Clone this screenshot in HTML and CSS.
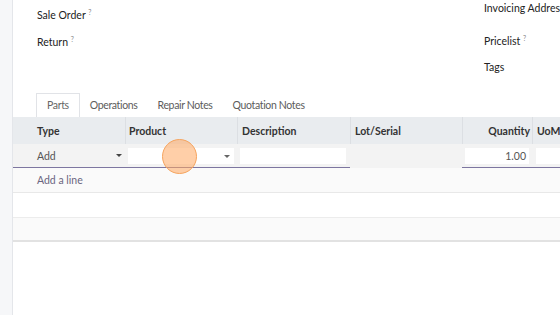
FILE: index.html
```html
<!DOCTYPE html>
<html lang="en">
<head>
    <meta charset="UTF-8">
    <title>Repair Order</title>
    <link rel="stylesheet" href="styles.css">
</head>
<body>
    <div class="gutter"></div>
    <div class="sheet">
        <div class="fields">
            <div class="col left">
                <div class="field f-sale">Sale Order <sup>?</sup></div>
                <div class="field f-return">Return <sup>?</sup></div>
            </div>
            <div class="col right">
                <div class="field f-inv">Invoicing Address</div>
                <div class="field f-price">Pricelist <sup>?</sup></div>
                <div class="field f-tags">Tags</div>
            </div>
        </div>

        <div class="tabs">
            <div class="tab active">Parts</div>
            <div class="tab">Operations</div>
            <div class="tab">Repair Notes</div>
            <div class="tab">Quotation Notes</div>
        </div>

        <div class="grid">
            <div class="row head">
                <div class="c c-type">Type</div>
                <div class="c c-prod">Product</div>
                <div class="c c-desc">Description</div>
                <div class="c c-lot">Lot/Serial</div>
                <div class="c c-qty">Quantity</div>
                <div class="c c-uom">UoM</div>
            </div>
            <div class="row edit">
                <div class="c c-type line"><span>Add</span><span class="caret"></span></div>
                <div class="c c-prod line"><div class="input"><span class="caret"></span></div>
                    <div class="click"></div>
                </div>
                <div class="c c-desc line"><div class="input"></div></div>
                <div class="c c-lot"></div>
                <div class="c c-qty line"><div class="input num">1.00</div></div>
                <div class="c c-uom line"><div class="input"></div></div>
            </div>
            <div class="row add"><div class="c c-type">Add a line</div></div>
            <div class="row empty"></div>
            <div class="row empty alt"></div>
        </div>
    </div>
</body>
</html>
```

FILE: styles.css
```css
body {
    margin: 0;
    width: 560px;
    height: 315px;
    overflow: hidden;
    display: flex;
    font-family: Lato, "Liberation Sans", sans-serif;
    font-size: 10.5px;
    color: #333;
    background: #fff;
}

.gutter {
    width: 12px;
    flex: none;
    background: #f6f7f9;
    border-right: 1px solid #e4e6ea;
}

.sheet {
    flex: none;
    width: 700px;
}

/* top fields */
.fields {
    display: flex;
    height: 92px;
}

.col {
    display: flex;
    flex-direction: column;
}

.left {
    width: 447px;
    padding-left: 24px;
    padding-top: 6px;
    gap: 14px;
}

.right {
    padding-top: 2px;
}

.field {
    height: 13px;
    line-height: 13px;
    color: #222;
    white-space: nowrap;
}

.f-price { margin-top: 17px; }
.f-tags  { margin-top: 16px; }

sup {
    font-size: 7px;
    color: #8a8a8a;
    vertical-align: 4px;
}

/* tabs */
.tabs {
    display: flex;
    padding-left: 23px;
    height: 25px;
    align-items: flex-end;
    font-size: 10.5px;
    letter-spacing: -0.35px;
}

.tab {
    padding: 0 10px;
    height: 23px;
    line-height: 23px;
    color: #5c5c5c;
}

.tab.active {
    border: 1px solid #e1e3e7;
    border-bottom: none;
    background: #fff;
    color: #666;
}

/* list */
.row {
    display: flex;
}

.c {
    position: relative;
    box-sizing: border-box;
    flex: none;
    padding-left: 4px;
    display: flex;
    align-items: center;
}

.c-type { width: 112px; padding-left: 24px; }
.c-prod { width: 112px; padding-left: 3px; }
.c-desc { width: 113px; }
.c-lot  { width: 112px; }
.c-qty  { width: 70px; justify-content: flex-end; padding-left: 2px; padding-right: 3px; }
.c-uom  { width: 120px; }

.head {
    height: 27px;
    background: #e9ecef;
    font-weight: bold;
    color: #333;
}

.head .c + .c {
    border-left: 1px solid #dcdfe3;
}

.head .c-qty {
    padding-right: 2px;
}

.edit {
    height: 24px;
    background: #f3f3f3;
}

.edit .line {
    border-bottom: 1px solid #7d76a0;
}

.edit .c-type {
    justify-content: space-between;
    padding-right: 3px;
    color: #555;
}

.input {
    position: relative;
    background: #fff;
    height: 16px;
    line-height: 16px;
    width: 106px;
}

.c-desc .input { width: 106px; margin-left: -1px; }
.c-qty .input { width: 64px; text-align: right; padding-right: 3px; box-sizing: border-box; color: #555; }
.c-uom .input { width: 100%; }

.caret {
    width: 0;
    height: 0;
    border-left: 3px solid transparent;
    border-right: 3px solid transparent;
    border-top: 3px solid #444;
}

.input .caret {
    position: absolute;
    right: 4px;
    top: 7px;
    border-top-color: #666;
}

.click {
    position: absolute;
    left: 37px;
    top: -5px;
    width: 33px;
    height: 33px;
    border-radius: 50%;
    background: rgba(255, 168, 96, 0.55);
    border: 1px solid #f6a45e;
}

.add {
    height: 24px;
    background: #fafafa;
    border-bottom: 1px solid #e8e8e8;
}

.add .c {
    color: #6b6580;
}

.empty {
    height: 24px;
    border-bottom: 1px solid #ececec;
}

.empty.alt {
    height: 22px;
    background: #fafafa;
    border-bottom: 2px solid #e2e2e2;
}
```
